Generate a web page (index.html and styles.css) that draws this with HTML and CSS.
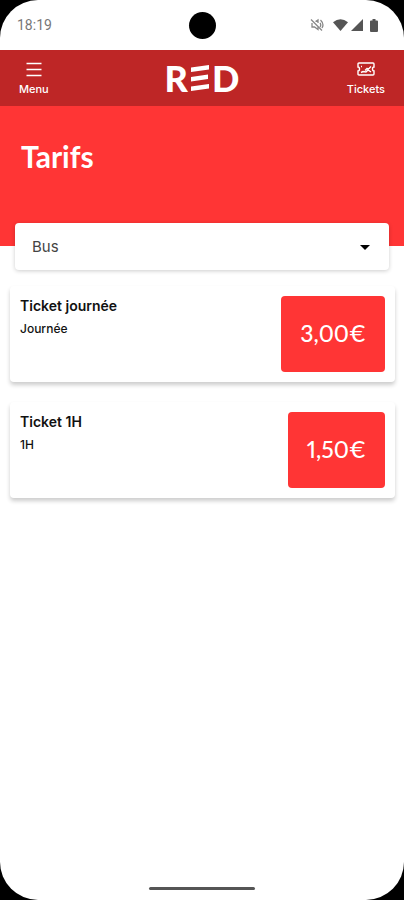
FILE: index.html
```html
<!DOCTYPE html>
<html lang="fr">
<head>
  <meta charset="UTF-8" />
  <meta name="viewport" content="width=device-width, initial-scale=1.0"/>
  <title>Tarifs</title>
  <link rel="stylesheet" href="styles.css">
</head>
<body>

  <div class="screen">
    <div class="status-bar">
      <span class="clock">18:19</span>
      <span class="camera"></span>
      <div class="status-icons">
        <svg class="icon-mute" width="14" height="14" viewBox="0 0 14 14" fill="none" stroke="#888" stroke-width="1.3">
          <path d="M1 1.500l11 11M2 5v4h2.500L8 11.500V9M5.500 3.500L8 2v3M10 5q1.500 2 0 4M10.500 2q4 4 1.500 8"/>
        </svg>
        <svg class="icon-wifi" width="15" height="12" viewBox="0 0 15 12" fill="#555">
          <path d="M0 3.200Q7.500-2.800 15 3.200L7.500 12z"/>
        </svg>
        <svg class="icon-signal" width="12" height="12" viewBox="0 0 12 12" fill="#555">
          <path d="M12 0v12H0z"/>
        </svg>
        <svg class="icon-battery" width="8" height="13" viewBox="0 0 8 13" fill="#555">
          <path d="M2.500 0h3v1.500H7q1 0 1 1V12q0 1-1 1H1q-1 0-1-1V2.500q0-1 1-1h1.500z"/>
        </svg>
      </div>
    </div>

    <header class="nav">
      <button class="nav-button" type="button">
        <svg width="16" height="16" viewBox="0 0 16 16" fill="none" stroke="#fff" stroke-width="1.300">
          <path d="M.500 2.500h15M.500 8.500h15M.500 14.500h15"/>
        </svg>
        Menu
      </button>
      <div class="logo">
        <span>R</span>
        <svg width="20" height="26" viewBox="0 0 20 26" fill="#fff" role="img" aria-label="E">
          <path d="M1 2.500L19 0v4.500L1 7zM1 12l17-2.500V14L1 16.500zM1 21.500L19 19v4.500L1 26z"/>
        </svg>
        <span>D</span>
      </div>
      <button class="nav-button" type="button">
        <svg width="18" height="16" viewBox="0 0 18 16" fill="none" stroke="#fff" stroke-width="1.400">
          <path d="M2 2h14q1 0 1 1v3q-1.500 0-1.500 2t1.500 2v3q0 1-1 1H2q-1 0-1-1v-3q1.500 0 1.500-2T1 6V3q0-1 1-1z"/>
          <path d="M4 5.500h1M4 11.500l2-1 3 .500 2-2 3 2M8 9.500l2-2 1 1 3-3"/>
        </svg>
        Tickets
      </button>
    </header>

    <div class="banner">
      <h1>Tarifs</h1>
    </div>

    <main>
      <div class="picker">
        <select class="picker-select" aria-label="Type de transport">
          <option>Bus</option>
          <option>Tram</option>
        </select>
        <svg class="picker-caret" width="10" height="5" viewBox="0 0 10 5"><path d="M0 0h10L5 5z"/></svg>
      </div>

      <div class="card">
        <div class="card-text">
          <h2>Ticket journée</h2>
          <p>Journée</p>
        </div>
        <button class="price" type="button">3,00€</button>
      </div>

      <div class="card">
        <div class="card-text">
          <h2>Ticket 1H</h2>
          <p>1H</p>
        </div>
        <button class="price" type="button">1,50€</button>
      </div>
    </main>

    <div class="home-bar"></div>
  </div>

</body>
</html>
```
FILE: styles.css
```css
* {
  box-sizing: border-box;
}

body {
  margin: 0;
  background: #000;
  font-family: Inter, sans-serif;
  color: #111;
}

.screen {
  display: flex;
  flex-direction: column;
  min-height: 100vh;
  background: #fff;
  border-radius: 38px;
  overflow: hidden;
}

/* status bar */
.status-bar {
  display: grid;
  grid-template-columns: 1fr auto 1fr;
  align-items: center;
  height: 50px;
  padding: 0 26px 0 17px;
}

.clock {
  font-family: Roboto, sans-serif;
  font-size: 14px;
  color: #777;
}

.camera {
  width: 27px;
  height: 27px;
  margin-left: 9px;
  border-radius: 50%;
  background: #000;
}

.status-icons {
  display: flex;
  align-items: center;
  justify-content: flex-end;
  gap: 3px;
}

.icon-mute {
  margin-right: 6px;
}

.icon-battery {
  margin-left: 4px;
}

/* top navigation */
.nav {
  display: grid;
  grid-template-columns: 1fr auto 1fr;
  align-items: center;
  height: 56px;
  padding: 0 19px;
  background: #be2626;
}

.nav-button {
  display: flex;
  flex-direction: column;
  align-items: center;
  gap: 5px;
  justify-self: start;
  padding: 0;
  border: 0;
  background: none;
  color: #fff;
  font-family: Inter, sans-serif;
  font-size: 11px;
  line-height: 14px;
  font-weight: 500;
}

.nav-button:last-child {
  justify-self: end;
}

.logo {
  display: flex;
  align-items: center;
  gap: 2px;
  color: #fff;
  font-family: Lato, sans-serif;
  font-size: 36px;
  line-height: 52px;
  font-weight: 900;
}

/* page */
.banner {
  height: 140px;
  padding: 32px 21px;
  background: #ff3535;
}

.banner h1 {
  margin: 0;
  color: #fff;
  font-family: Lato, sans-serif;
  font-size: 30px;
  line-height: 36px;
  font-weight: 700;
}

main {
  flex: 1;
}

.picker {
  position: relative;
  margin: -23px 15px 16px;
}

.picker-select {
  display: block;
  width: 100%;
  height: 47px;
  padding: 0 17px;
  border: 0;
  border-radius: 4px;
  background: #fff;
  box-shadow: 0 1px 4px rgba(0, 0, 0, 0.2);
  appearance: none;
  color: #444;
  font-family: Inter, sans-serif;
  font-size: 15px;
}

.picker-caret {
  position: absolute;
  top: 22px;
  right: 19px;
  pointer-events: none;
}

.card {
  display: flex;
  justify-content: space-between;
  align-items: flex-start;
  margin: 0 9px 20px 10px;
  padding: 10px;
  border-radius: 4px;
  background: #fff;
  box-shadow: 0 3px 4px rgba(0, 0, 0, 0.2);
}

.card h2 {
  margin: 0;
  font-size: 14px;
  line-height: 20px;
  font-weight: 600;
}

.card p {
  margin: 0;
  font-size: 12px;
  line-height: 26px;
  font-weight: 500;
}

.price {
  height: 76px;
  padding: 0 19px 2px;
  border: 0;
  border-radius: 4px;
  background: #ff3535;
  color: #fff;
  font-family: Lato, sans-serif;
  font-size: 23px;
  font-weight: 500;
  font-variant-numeric: proportional-nums;
}

.home-bar {
  width: 106px;
  height: 3px;
  margin: 0 auto 10px;
  border-radius: 2px;
  background: #555;
}
```
